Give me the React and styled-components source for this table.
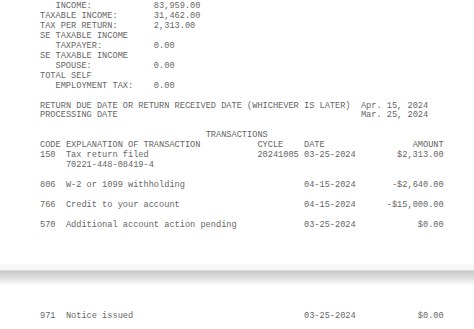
import React from "react";
import styled, { createGlobalStyle } from "styled-components";

const LH = 9.96;

const GlobalStyle = createGlobalStyle`
	html, body {
		margin: 0;
		padding: 0;
		background: #ffffff;
	}
`;

const Sheet = styled.div`
	width: 474px;
	height: 329px;
	overflow: hidden;
	font-family: "Liberation Mono", "DejaVu Sans Mono", monospace;
	font-size: 8.65px;
	line-height: ${LH}px;
	color: #666666;
	white-space: pre;
`;

const Page = styled.section`
	padding: ${p => p.$pad || "0"};
	padding-left: 40px;
	margin-top: ${p => p.$top || 0}px;
	width: 78ch;
`;

const Line = styled.div`
	height: ${LH}px;
	padding-left: ${p => (p.$indent || 0)}ch;
`;

const Blank = styled.div`
	height: ${p => (p.$lines || 1) * LH}px;
`;

const KeyValue = styled.div`
	display: grid;
	grid-template-columns: ${p => p.$key}ch auto;
	height: ${LH}px;
`;

const Key = styled.span`
	padding-left: ${p => (p.$indent || 0)}ch;
`;

const TxRow = styled.div`
	display: grid;
	grid-template-columns: 5ch 37ch 9ch 10ch 17ch;
	height: ${LH}px;
`;

const Amount = styled.span`
	text-align: right;
`;

const PageBreak = styled.div`
	margin-top: 33px;
	height: 21px;
	background: linear-gradient(
		to bottom,
		#fbfbfb 0px,
		#f5f5f5 6px,
		#c6c6c6 7px,
		#d4d4d4 10px,
		#dedede 14px,
		#ececec 17px,
		#fafafa 21px
	);
`;

const figures = [
	{ label: "INCOME:", indent: 3, value: "83,959.00" },
	{ label: "TAXABLE INCOME:", value: "31,462.00" },
	{ label: "TAX PER RETURN:", value: "2,313.00" },
	{ label: "SE TAXABLE INCOME" },
	{ label: "TAXPAYER:", indent: 3, value: "0.00" },
	{ label: "SE TAXABLE INCOME" },
	{ label: "SPOUSE:", indent: 3, value: "0.00" },
	{ label: "TOTAL SELF" },
	{ label: "EMPLOYMENT TAX:", indent: 3, value: "0.00" },
];

const transactions = [
	{ code: "150", text: "Tax return filed", cycle: "20241005", date: "03-25-2024", amount: "$2,313.00", sub: "70221-448-08419-4" },
	{ code: "806", text: "W-2 or 1099 withholding", date: "04-15-2024", amount: "-$2,640.00" },
	{ code: "766", text: "Credit to your account", date: "04-15-2024", amount: "-$15,000.00" },
	{ code: "570", text: "Additional account action pending", date: "03-25-2024", amount: "$0.00" },
];

const Transaction = ({ code, text, cycle, date, amount, sub }) => (
	<>
		<TxRow>
			<span>{code}</span>
			<span>{text}</span>
			<span>{cycle || ""}</span>
			<span>{date}</span>
			<Amount>{amount}</Amount>
		</TxRow>
		{sub && <Line $indent={5}>{sub}</Line>}
	</>
);

export default function App() {
	return (
		<Sheet>
			<GlobalStyle />
			<Page $top={2}>
				{figures.map((f, i) => (
					<KeyValue key={i} $key={22}>
						<Key $indent={f.indent}>{f.label}</Key>
						<span>{f.value || ""}</span>
					</KeyValue>
				))}
				<Blank />
				<KeyValue $key={62}>
					<span>RETURN DUE DATE OR RETURN RECEIVED DATE (WHICHEVER IS LATER)</span>
					<span>Apr. 15, 2024</span>
				</KeyValue>
				<KeyValue $key={62}>
					<span>PROCESSING DATE</span>
					<span>Mar. 25, 2024</span>
				</KeyValue>
				<Blank />
				<Line $indent={32}>TRANSACTIONS</Line>
				<TxRow>
					<span>CODE</span>
					<span>EXPLANATION OF TRANSACTION</span>
					<span>CYCLE</span>
					<span>DATE</span>
					<Amount>AMOUNT</Amount>
				</TxRow>
				{transactions.map((t, i) => (
					<React.Fragment key={t.code}>
						{i > 0 && <Blank />}
						<Transaction {...t} />
					</React.Fragment>
				))}
			</Page>
			<PageBreak />
			<Page $pad="27px 0 0">
				<Transaction code="971" text="Notice issued" date="03-25-2024" amount="$0.00" />
			</Page>
		</Sheet>
	);
}
